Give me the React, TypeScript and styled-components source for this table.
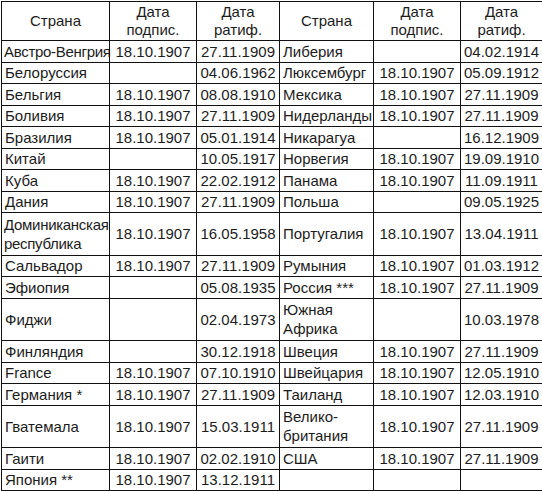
import React from "react";
import styled, { createGlobalStyle } from "styled-components";

type Row = {
  tall?: boolean;
  cells: [string, string, string, string, string, string];
};

const rows: Row[] = [
  { cells: ["Австро-Венгрия", "18.10.1907", "27.11.1909", "Либерия", "", "04.02.1914"] },
  { cells: ["Белоруссия", "", "04.06.1962", "Люксембург", "18.10.1907", "05.09.1912"] },
  { cells: ["Бельгия", "18.10.1907", "08.08.1910", "Мексика", "18.10.1907", "27.11.1909"] },
  { cells: ["Боливия", "18.10.1907", "27.11.1909", "Нидерланды", "18.10.1907", "27.11.1909"] },
  { cells: ["Бразилия", "18.10.1907", "05.01.1914", "Никарагуа", "", "16.12.1909"] },
  { cells: ["Китай", "", "10.05.1917", "Норвегия", "18.10.1907", "19.09.1910"] },
  { cells: ["Куба", "18.10.1907", "22.02.1912", "Панама", "18.10.1907", "11.09.1911"] },
  { cells: ["Дания", "18.10.1907", "27.11.1909", "Польша", "", "09.05.1925"] },
  { tall: true, cells: ["Доминиканская\nреспублика", "18.10.1907", "16.05.1958", "Португалия", "18.10.1907", "13.04.1911"] },
  { cells: ["Сальвадор", "18.10.1907", "27.11.1909", "Румыния", "18.10.1907", "01.03.1912"] },
  { cells: ["Эфиопия", "", "05.08.1935", "Россия ***", "18.10.1907", "27.11.1909"] },
  { tall: true, cells: ["Фиджи", "", "02.04.1973", "Южная\nАфрика", "", "10.03.1978"] },
  { cells: ["Финляндия", "", "30.12.1918", "Швеция", "18.10.1907", "27.11.1909"] },
  { cells: ["France", "18.10.1907", "07.10.1910", "Швейцария", "18.10.1907", "12.05.1910"] },
  { cells: ["Германия *", "18.10.1907", "27.11.1909", "Таиланд", "18.10.1907", "12.03.1910"] },
  { tall: true, cells: ["Гватемала", "18.10.1907", "15.03.1911", "Велико-\nбритания", "18.10.1907", "27.11.1909"] },
  { cells: ["Гаити", "18.10.1907", "02.02.1910", "США", "18.10.1907", "27.11.1909"] },
  { cells: ["Япония **", "18.10.1907", "13.12.1911", "", "", ""] },
];

const widths = [108, 87, 83, 94, 87, 82];

export default function App() {
  return (
    <>
      <GlobalStyle />
      <Table>
        <colgroup>
          {widths.map((w, i) => (
            <col key={i} style={{ width: w }} />
          ))}
        </colgroup>
        <thead>
          <tr>
            <HeadCell>Страна</HeadCell>
            <HeadCell>Дата<br />подпис.</HeadCell>
            <HeadCell>Дата<br />ратиф.</HeadCell>
            <HeadCell>Страна</HeadCell>
            <HeadCell>Дата<br />подпис.</HeadCell>
            <HeadCell>Дата<br />ратиф.</HeadCell>
          </tr>
        </thead>
        <tbody>
          {rows.map((row, i) => (
            <BodyRow key={i} $tall={row.tall}>
              {row.cells.map((text, j) =>
                j % 3 === 0 ? (
                  <NameCell key={j} $tight={text.split("\n").some((l) => l.length > 12)}>
                    {text.split("\n").map((line, k) => (
                      <React.Fragment key={k}>
                        {k > 0 && <br />}
                        {line}
                      </React.Fragment>
                    ))}
                  </NameCell>
                ) : (
                  <DateCell key={j}>{text}</DateCell>
                )
              )}
            </BodyRow>
          ))}
        </tbody>
      </Table>
    </>
  );
}

const GlobalStyle = createGlobalStyle`
  body {
    margin: 0;
    background: #ffffff;
    font-family: "Liberation Sans", Arial, sans-serif;
    color: #1c1c1c;
  }
`;

const Table = styled.table`
  border-collapse: collapse;
  table-layout: fixed;
  width: 541px;
  margin: 1px 0 0 1px;
  font-size: 15px;

  td,
  th {
    border: 1px solid #111;
    padding: 0;
  }
`;

const HeadCell = styled.th`
  height: 38px;
  font-weight: normal;
  text-align: center;
  vertical-align: middle;
  line-height: 18px;
`;

const BodyRow = styled.tr<{ $tall?: boolean }>`
  td {
    height: ${(p) => (p.$tall ? "41.5px" : "20.5px")};
    vertical-align: middle;
    line-height: 19px;
  }
`;

const NameCell = styled.td<{ $tight?: boolean }>`
  text-align: left;
  padding-left: ${(p) => (p.$tight ? "2px" : "3px")} !important;
  letter-spacing: ${(p) => (p.$tight ? "-0.3px" : "0")};
  white-space: nowrap;
`;

const DateCell = styled.td`
  text-align: center;
  white-space: nowrap;
`;
